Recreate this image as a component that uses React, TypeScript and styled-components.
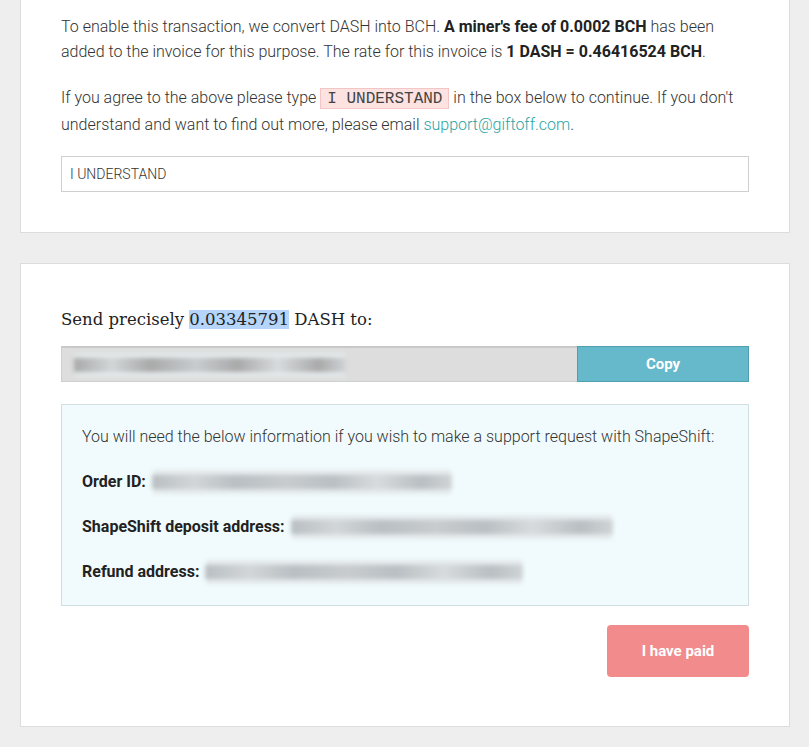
import styled, { createGlobalStyle } from "styled-components"

const GlobalStyle = createGlobalStyle`
  html, body {
    margin: 0;
    padding: 0;
    background: #eeeeee;
  }
  body {
    font-family: Roboto, "Liberation Sans", sans-serif;
    color: #333;
    overflow: hidden;
  }
`

interface BlurProps {
  $width: number
  $tone?: string
}

const App = () => {
  return (
    <Page>
      <GlobalStyle />
      <Card $cut>
        <Para>
          To enable this transaction, we convert DASH into BCH. <b>A miner's fee of 0.0002 BCH</b> has been
          added to the invoice for this purpose. The rate for this invoice is <b>1 DASH = 0.46416524 BCH</b>.
        </Para>
        <Para>
          If you agree to the above please type <Code>I UNDERSTAND</Code> in the box below to continue. If you don't
          understand and want to find out more, please email <Link href="#">support@giftoff.com</Link>.
        </Para>
        <TextInput defaultValue="I UNDERSTAND" />
      </Card>

      <Card>
        <Heading>
          Send precisely <Selected>0.03345791</Selected> DASH to:
        </Heading>
        <AddressRow>
          <AddressField>
            <Blur $width={272} $tone="#a9a9a9" />
          </AddressField>
          <CopyButton>Copy</CopyButton>
        </AddressRow>
        <InfoBox>
          <InfoText>You will need the below information if you wish to make a support request with ShapeShift:</InfoText>
          <InfoRow>
            <Label>Order ID:</Label>
            <Blur $width={300} />
          </InfoRow>
          <InfoRow>
            <Label>ShapeShift deposit address:</Label>
            <Blur $width={322} />
          </InfoRow>
          <InfoRow>
            <Label>Refund address:</Label>
            <Blur $width={318} />
          </InfoRow>
        </InfoBox>
        <Actions>
          <PaidButton>I have paid</PaidButton>
        </Actions>
      </Card>
    </Page>
  )
}

export default App

const Page = styled.div`
  display: flex;
  flex-direction: column;
  gap: 30px;
  padding: 0 19px 20px 20px;
`

const Card = styled.section<{ $cut?: boolean }>`
  background: #fff;
  border: 1px solid #dcdcdc;
  padding: ${(p) => (p.$cut ? "41px 40px 40px" : "40px 40px 49px")};
  margin-top: ${(p) => (p.$cut ? "-28px" : "0")};
  display: flex;
  flex-direction: column;
`

const Para = styled.p`
  margin: 0 0 21px;
  font-size: 16px;
  font-weight: 300;
  line-height: 25px;
  color: #333;

  b {
    font-weight: 700;
    color: #222;
  }
`

const Code = styled.code`
  font-family: "Liberation Mono", "DejaVu Sans Mono", monospace;
  font-size: 16px;
  font-weight: 400;
  color: #444;
  background: #fde2e2;
  border: 1px solid #f3c5c5;
  padding: 1px 6px 0;
`

const Link = styled.a`
  color: #2aa5a5;
  text-decoration: none;
`

const TextInput = styled.input`
  margin-top: -2px;
  height: 36px;
  box-sizing: border-box;
  border: 1px solid #cfcfcf;
  padding: 0 8px;
  font-family: Roboto, "Liberation Sans", sans-serif;
  font-size: 14px;
  font-weight: 300;
  color: #333;
  outline: none;
`

const Heading = styled.h2`
  margin: 4px 0 14px;
  font-family: "DejaVu Serif", "Liberation Serif", serif;
  font-size: 16.5px;
  font-weight: 400;
  color: #222;
  line-height: 24px;
`

const Selected = styled.span`
  background: #b5d5fb;
`

const AddressRow = styled.div`
  display: flex;
  height: 36px;
`

const AddressField = styled.div`
  flex: 1;
  display: flex;
  align-items: center;
  padding-left: 12px;
  background: #dddddd;
  border: 1px solid #cfcfcf;
  border-top: 2px solid #c8c8c8;
  border-right: none;
`

const CopyButton = styled.button`
  width: 172px;
  border: 1px solid #4f9fb3;
  background: #66b8cb;
  color: #fff;
  font-family: Roboto, "Liberation Sans", sans-serif;
  font-size: 15px;
  font-weight: 700;
  cursor: pointer;
`

const Blur = styled.span<BlurProps>`
  display: inline-block;
  width: ${(p) => p.$width}px;
  height: 14px;
  background: linear-gradient(
    90deg,
    ${(p) => p.$tone ?? "#b9bfc2"} 0%,
    #d2d6d8 14%,
    ${(p) => p.$tone ?? "#b9bfc2"} 28%,
    #c8cccf 45%,
    ${(p) => p.$tone ?? "#b9bfc2"} 60%,
    #d7dbdd 75%,
    ${(p) => p.$tone ?? "#b9bfc2"} 90%,
    #d0d4d6 100%
  );
  filter: blur(2px);
  box-shadow: 0 -6px 0 -1px #e3e8ea, 0 6px 0 -1px #e3e8ea;
`

const InfoBox = styled.div`
  margin-top: 22px;
  background: #f1fbfd;
  border: 1px solid #cfdfe2;
  padding: 20px 20px 21px;
  display: flex;
  flex-direction: column;
  gap: 20px;
`

const InfoText = styled.p`
  margin: 0;
  font-size: 16px;
  font-weight: 300;
  line-height: 24px;
  color: #333;
`

const InfoRow = styled.div`
  display: flex;
  align-items: center;
  gap: 6px;
  height: 25px;
`

const Label = styled.span`
  font-size: 16px;
  font-weight: 700;
  color: #222;
`

const Actions = styled.div`
  display: flex;
  justify-content: flex-end;
  margin-top: 19px;
`

const PaidButton = styled.button`
  width: 142px;
  height: 52px;
  border: none;
  border-radius: 4px;
  background: #f28c8c;
  color: #fff;
  font-family: Roboto, "Liberation Sans", sans-serif;
  font-size: 15px;
  font-weight: 700;
  cursor: pointer;
`
